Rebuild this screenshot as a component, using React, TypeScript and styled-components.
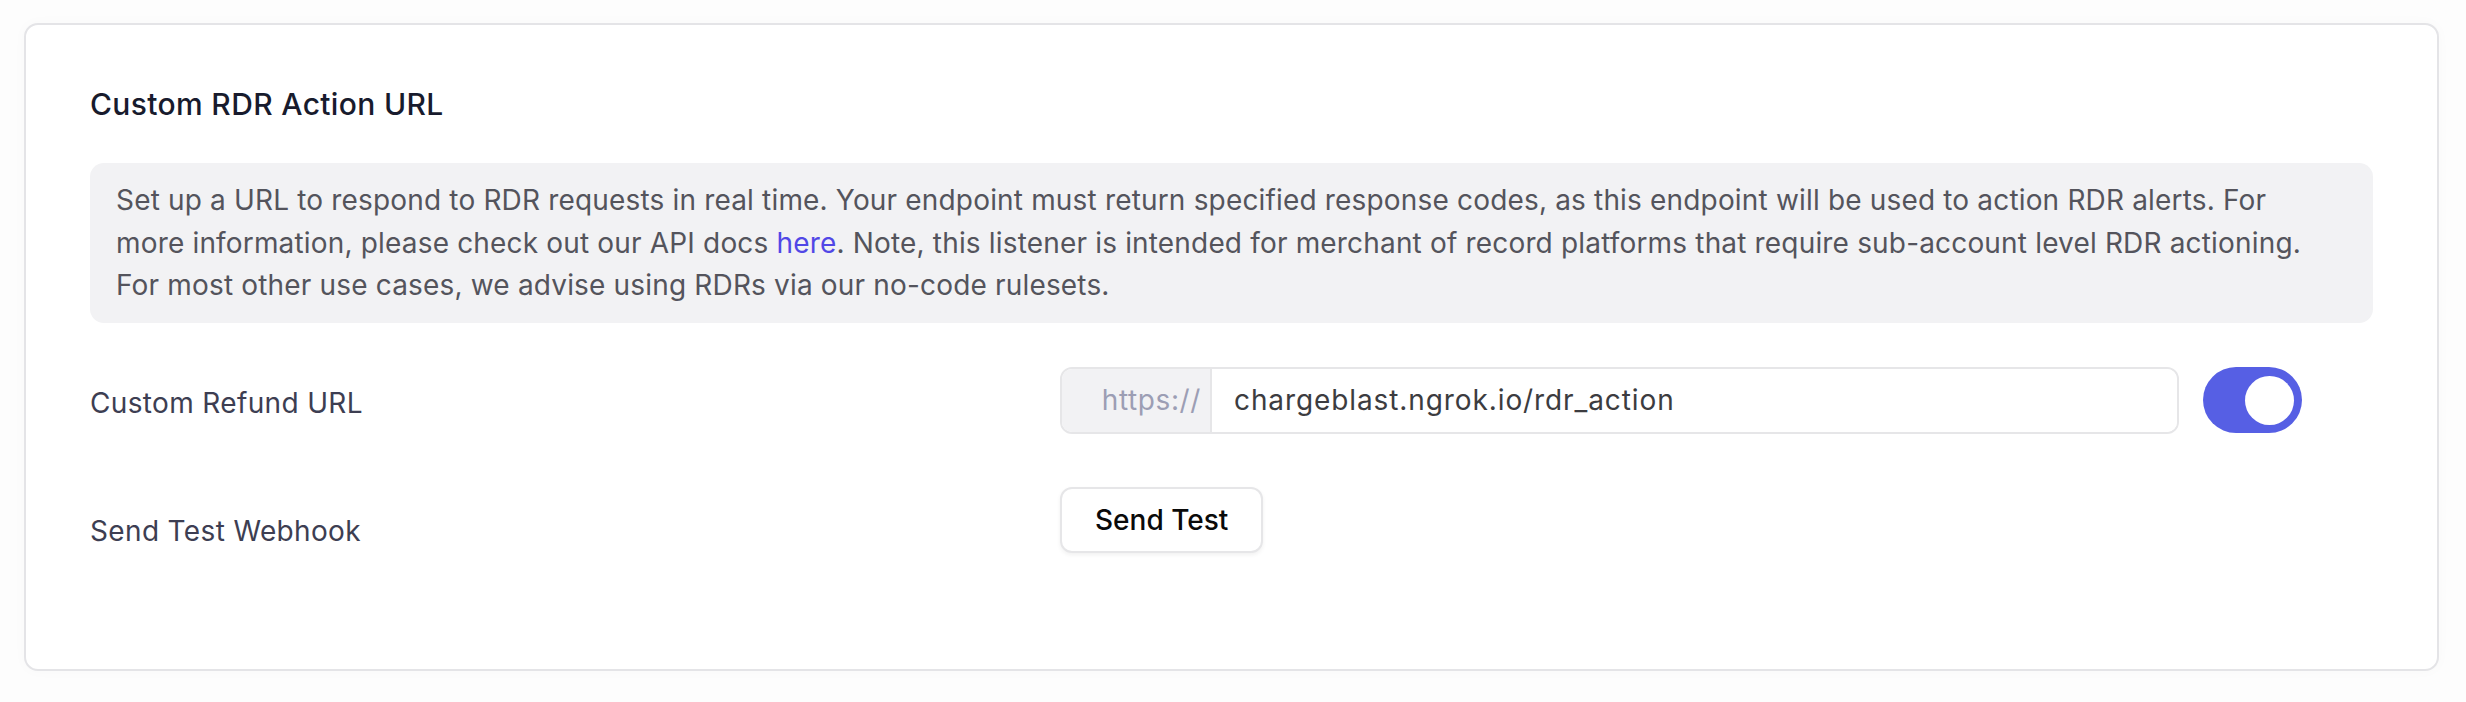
import styled, { createGlobalStyle } from "styled-components";
import { useState } from "react";

const Global = createGlobalStyle`
  body {
    margin: 0;
    background: #fdfdfd;
    font-family: Inter, "Noto Sans", sans-serif;
  }
`;

const App = () => {
  const [enabled, setEnabled] = useState(true);

  return (
    <Page>
      <Global />
      <Card>
        <Title>Custom RDR Action URL</Title>

        <Notice>
          Set up a URL to respond to RDR requests in real time. Your endpoint must return
          specified response codes, as this endpoint will be used to action RDR alerts. For
          more information, please check out our API docs <Link href="#">here</Link>. Note,
          this listener is intended for merchant of record platforms that require sub-account
          level RDR actioning. For most other use cases, we advise using RDRs via our no-code
          rulesets.
        </Notice>

        <Row>
          <Label $top={16}>Custom Refund URL</Label>
          <Controls>
            <InputGroup>
              <Prefix>https://</Prefix>
              <UrlInput defaultValue="chargeblast.ngrok.io/rdr_action" />
            </InputGroup>
            <Toggle $on={enabled} onClick={() => setEnabled(!enabled)}>
              <Knob $on={enabled} />
            </Toggle>
          </Controls>
        </Row>

        <Row $gap={53}>
          <Label $top={24}>Send Test Webhook</Label>
          <Controls>
            <Button>Send Test</Button>
          </Controls>
        </Row>
      </Card>
    </Page>
  );
};

export default App;

const Page = styled.div`
  padding: 23px 27px 31px 24px;
`;

const Card = styled.section`
  background: #fff;
  border: 2px solid #e4e4e7;
  border-radius: 14px;
  box-shadow: 0 0 14px rgba(0, 0, 0, 0.025);
  padding: 61px 64px 116px 64px;
  display: flex;
  flex-direction: column;
`;

const Title = styled.h2`
  margin: 0 0 41px;
  font-size: 30px;
  line-height: 36px;
  font-weight: 500;
  letter-spacing: 0.35px;
  color: #181b2d;
`;

const Notice = styled.p`
  margin: 0 0 44px;
  background: #f2f2f4;
  border-radius: 14px;
  padding: 16px 60px 16px 26px;
  font-size: 28px;
  line-height: 42.5px;
  letter-spacing: 0.17px;
  color: #54545c;
`;

const Link = styled.a`
  color: #5147e6;
  text-decoration: none;
`;

const Row = styled.div<{ $gap?: number }>`
  display: grid;
  grid-template-columns: 970px 1fr;
  align-items: start;
  margin-top: ${(p) => p.$gap ?? 0}px;
`;

const Label = styled.div<{ $top: number }>`
  padding-top: ${(p) => p.$top}px;
  font-size: 28px;
  line-height: 40px;
  letter-spacing: 0.35px;
  color: #3d3e52;
`;

const Controls = styled.div`
  display: flex;
  align-items: center;
  gap: 24px;
`;

const InputGroup = styled.div`
  width: 1119px;
  height: 67px;
  box-sizing: border-box;
  display: flex;
  border: 2px solid #e6e6e8;
  border-radius: 12px;
  overflow: hidden;
`;

const Prefix = styled.span`
  width: 150px;
  box-sizing: border-box;
  display: flex;
  align-items: center;
  justify-content: flex-end;
  padding-right: 9px;
  background: #f2f2f4;
  border-right: 2px solid #e6e6e8;
  font-size: 28px;
  letter-spacing: 0.6px;
  color: #9c9eb4;
`;

const UrlInput = styled.input`
  flex: 1;
  border: none;
  outline: none;
  padding: 0 22px;
  font-family: Inter, "Noto Sans", sans-serif;
  font-size: 28px;
  color: #3c3c40;
  letter-spacing: 0.9px;
  background: #fff;
`;

const Toggle = styled.button<{ $on: boolean }>`
  width: 99px;
  height: 66px;
  padding: 0 8px;
  border: none;
  border-radius: 33px;
  background: ${(p) => (p.$on ? "#565fe4" : "#d4d4d8")};
  display: flex;
  align-items: center;
  justify-content: ${(p) => (p.$on ? "flex-end" : "flex-start")};
  cursor: pointer;
`;

const Knob = styled.span<{ $on: boolean }>`
  width: 49px;
  height: 49px;
  border-radius: 50%;
  background: #fff;
`;

const Button = styled.button`
  height: 66px;
  padding: 0 33px;
  background: #fff;
  border: 2px solid #e6e6e8;
  border-radius: 12px;
  box-shadow: 0 2px 4px rgba(0, 0, 0, 0.06);
  font-family: Inter, "Noto Sans", sans-serif;
  font-size: 28px;
  font-weight: 500;
  color: #0a0a0a;
  cursor: pointer;
`;
